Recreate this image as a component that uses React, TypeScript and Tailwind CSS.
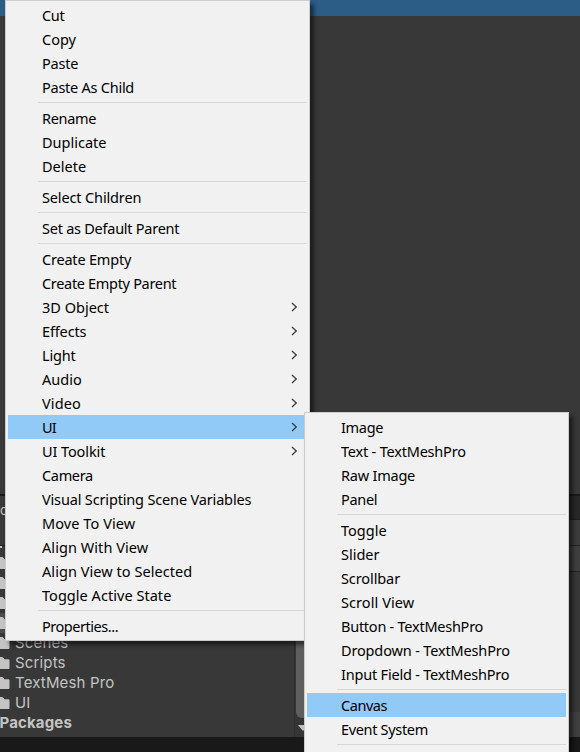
import React from "react";

type Entry = { label: string; track?: string; arrow?: boolean; active?: boolean } | null;

const mainMenu: Entry[] = [
  { label: "Cut", track: "tracking-[-0.3px]" },
  { label: "Copy" },
  { label: "Paste", track: "tracking-[-0.2px]" },
  { label: "Paste As Child", track: "tracking-[-0.25px]" },
  null,
  { label: "Rename", track: "tracking-[-0.3px]" },
  { label: "Duplicate" },
  { label: "Delete" },
  null,
  { label: "Select Children", track: "tracking-[-0.14px]" },
  null,
  { label: "Set as Default Parent", track: "tracking-[-0.25px]" },
  null,
  { label: "Create Empty", track: "tracking-[-0.2px]" },
  { label: "Create Empty Parent", track: "tracking-[-0.32px]" },
  { label: "3D Object", arrow: true },
  { label: "Effects", track: "tracking-[-0.14px]", arrow: true },
  { label: "Light", track: "tracking-[-0.2px]", arrow: true },
  { label: "Audio", arrow: true },
  { label: "Video", track: "tracking-[0.1px]", arrow: true },
  { label: "UI", track: "tracking-[-0.8px]", arrow: true, active: true },
  { label: "UI Toolkit", track: "tracking-[-0.1px]", arrow: true },
  { label: "Camera", track: "tracking-[-0.33px]" },
  { label: "Visual Scripting Scene Variables", track: "tracking-[-0.16px]" },
  { label: "Move To View", track: "tracking-[0.08px]" },
  { label: "Align With View", track: "tracking-[0.06px]" },
  { label: "Align View to Selected", track: "tracking-[0.06px]" },
  { label: "Toggle Active State", track: "tracking-[0.04px]" },
  null,
  { label: "Properties...", track: "tracking-[-0.46px]" },
];

const subMenu: Entry[] = [
  { label: "Image", track: "tracking-[-0.3px]" },
  { label: "Text - TextMeshPro", track: "tracking-[-0.2px]" },
  { label: "Raw Image", track: "tracking-[-0.22px]" },
  { label: "Panel", track: "tracking-[-0.3px]" },
  null,
  { label: "Toggle" },
  { label: "Slider" },
  { label: "Scrollbar", track: "tracking-[-0.1px]" },
  { label: "Scroll View", track: "tracking-[0.08px]" },
  { label: "Button - TextMeshPro", track: "tracking-[-0.25px]" },
  { label: "Dropdown - TextMeshPro", track: "tracking-[-0.15px]" },
  { label: "Input Field - TextMeshPro", track: "tracking-[-0.2px]" },
  null,
  { label: "Canvas", track: "tracking-[-0.45px]", active: true },
  { label: "Event System", track: "tracking-[-0.33px]" },
  null,
];

function Menu({ items, className = "" }: { items: Entry[]; className?: string }) {
  return (
    <div
      className={`border border-[#cccccc] bg-[#f1f1f1] p-[2px] font-['Noto_Sans',sans-serif] text-[14.5px] text-black shadow-[4px_4px_4px_rgba(0,0,0,0.5)] ${className}`}
    >
      {items.map((item, i) =>
        item ? (
          <div
            key={i}
            className={`flex h-6 items-center justify-between pl-[34px] pr-[9px] ${item.active ? "bg-[#91c9f7]" : ""}`}
          >
            <span className={`whitespace-nowrap leading-6 ${item.track ?? ""}`}>{item.label}</span>
            {item.arrow && (
              <svg width="7" height="10" viewBox="0 0 7 10" fill="none" stroke="#333" strokeWidth="1.2">
                <path d="M1 1l4.3 4L1 9" />
              </svg>
            )}
          </div>
        ) : (
          <div key={i} className="h-[7px] pt-[3px]">
            <div className="ml-[30px] h-px bg-[#d7d7d7]" />
          </div>
        ),
      )}
    </div>
  );
}

const folders = [
  { name: "" },
  { name: "" },
  { name: "" },
  { name: "", selected: true },
  { name: "Scenes" },
  { name: "Scripts" },
  { name: "TextMesh Pro" },
  { name: "UI" },
];

export default function App() {
  return (
    <div className="relative flex h-[752px] w-[580px] flex-col overflow-hidden bg-[#383838] font-['Inter',sans-serif] text-[#c4c4c4]">
      <div className="h-4 bg-[#2c5d87]" />
      <div className="h-[478px]" />
      <div className="h-[2px] bg-[#191919]" />
      <div className="flex h-[241px]">
        <div className="flex w-[294px] flex-col">
          <div className="h-[49px] pt-[4px] text-[13px] leading-5">o</div>
          <div className="h-px bg-[#1f1f1f]" />
          <div className="h-[7px]">
            <div className="h-[2px] w-[2px] bg-[#c4c4c4]" />
          </div>
          {folders.map((f, i) => (
            <div
              key={i}
              className={`flex h-5 shrink-0 items-center gap-[5px] text-[15px] tracking-[0.15px] ${f.selected ? "bg-[#4d4d4d]" : ""}`}
            >
              <svg width="10" height="12" viewBox="0 0 10 12" fill="#c4c4c4">
                <path d="M0 0h2q1 0 1.600 1l.9 1.200H8.500q1 0 1 1v7.800q0 1-1 1H0z" />
              </svg>
              <span>{f.name}</span>
            </div>
          ))}
          <div className="flex h-5 shrink-0 items-center text-[15px] font-bold tracking-[0.1px]">
            <span className="-ml-[0.5px] tracking-[0.15px]">Packages</span>
          </div>
        </div>
        <div className="flex w-[18px] flex-col border-l border-[#303030] bg-[#353535] pl-px">
          <div className="h-[222px] w-[13px] rounded-b-[6px] bg-[#5f5f5f]" />
          <svg className="ml-[2px] mt-[7px]" width="10" height="6" viewBox="0 0 10 6" fill="#c4c4c4">
            <path d="M0 0h10L5 6z" />
          </svg>
        </div>
        <div className="flex grow flex-col">
          <div className="h-6 border-b border-[#1f1f1f] bg-[#282828]" />
          <div className="h-[26px] border-b border-[#232323] bg-[#3c3c3c]" />
          <div className="h-[26px] border-b border-[#232323] bg-[#3f3f3f]" />
          <div className="grow bg-[#383838]" />
          <div className="h-[25px] bg-[#404040]" />
        </div>
      </div>
      <div className="grow bg-[#191919]" />

      <div className="absolute left-[5px] top-0 w-[305px]">
        <Menu items={mainMenu} />
      </div>
      <div className="absolute left-[304px] top-[412px] w-[265px]">
        <Menu items={subMenu} className="h-[360px]" />
      </div>
    </div>
  );
}
